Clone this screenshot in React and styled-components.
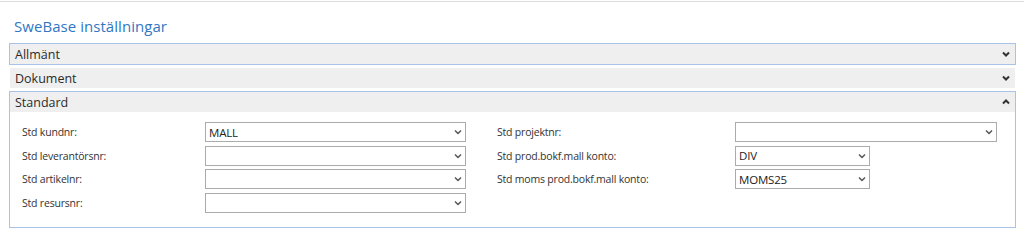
import React from "react";
import styled, { createGlobalStyle } from "styled-components";

const Global = createGlobalStyle`
  html, body { margin: 0; padding: 0; background: #ffffff; }
  body { font-family: "Open Sans", "Noto Sans", "Liberation Sans", sans-serif; color: #333; }
`;

const Page = styled.div`
  width: 1024px;
  height: 244px;
  box-sizing: border-box;
  border-top: 1px solid #dcdcdc;
  margin-top: 1px;
  padding: 0 8px 0 9px;
`;

const Title = styled.h1`
  margin: 0;
  padding: 14px 0 0 5px;
  height: 41px;
  box-sizing: border-box;
  font-weight: 400;
  font-size: 15px;
  letter-spacing: 0.05px;
  line-height: 20px;
  color: #2f77c4;
`;

const Sections = styled.div`
  display: flex;
  flex-direction: column;
  gap: 2px;
`;

const Section = styled.section`
  border: 1px solid ${(p) => (p.$active ? "#a9c3e8" : "transparent")};
`;

const Header = styled.div`
  height: 20px;
  background: #efefef;
  display: flex;
  align-items: center;
  justify-content: space-between;
  padding: 0 5px 0 5px;
  font-size: 12.5px;
  color: #2b2b2b;
`;

const Body = styled.div`
  display: grid;
  grid-template-columns: 475px 1fr;
  padding: 10px 0 14px 12px;
`;

const Column = styled.div`
  display: flex;
  flex-direction: column;
  gap: 3.5px;
`;

const Row = styled.div`
  display: grid;
  grid-template-columns: ${(p) => p.$labelWidth}px auto;
  align-items: center;
  height: 20px;
`;

const Label = styled.span`
  font-size: 10.5px;
  letter-spacing: -0.2px;
  color: #333;
`;

const Select = styled.div`
  box-sizing: border-box;
  width: ${(p) => p.$width}px;
  height: 20px;
  border: 1px solid #ababab;
  background: #fff;
  display: flex;
  align-items: center;
  justify-content: space-between;
  padding: 0 3px 0 3px;
  font-size: 11.5px;
  letter-spacing: -0.2px;
  color: #222;
`;

const Chevron = ({ up, bold }) => (
  <svg width="8" height="6" viewBox="0 0 8 6" style={{ display: "block" }}>
    <path
      d={up ? "M1 4.5 L4 1.5 L7 4.5" : "M1 1.5 L4 4.5 L7 1.5"}
      fill="none"
      stroke={bold ? "#333" : "#555"}
      strokeWidth={bold ? 2 : 1.5}
    />
  </svg>
);

const Field = ({ label, value, labelWidth, width }) => (
  <Row $labelWidth={labelWidth}>
    <Label>{label}</Label>
    <Select $width={width}>
      <span>{value}</span>
      <Chevron />
    </Select>
  </Row>
);

export default function App() {
  return (
    <>
      <Global />
      <Page>
        <Title>SweBase inställningar</Title>
        <Sections>
          <Section $active>
            <Header>
              <span>Allmänt</span>
              <Chevron bold />
            </Header>
          </Section>
          <Section>
            <Header>
              <span>Dokument</span>
              <Chevron bold />
            </Header>
          </Section>
          <Section $active>
            <Header>
              <span>Standard</span>
              <Chevron bold up />
            </Header>
            <Body>
              <Column>
                <Field label="Std kundnr:" value="MALL" labelWidth={183} width={261} />
                <Field label="Std leverantörsnr:" value="" labelWidth={183} width={261} />
                <Field label="Std artikelnr:" value="" labelWidth={183} width={261} />
                <Field label="Std resursnr:" value="" labelWidth={183} width={261} />
              </Column>
              <Column>
                <Field label="Std projektnr:" value="" labelWidth={238} width={262} />
                <Field label="Std prod.bokf.mall konto:" value="DIV" labelWidth={238} width={135} />
                <Field label="Std moms prod.bokf.mall konto:" value="MOMS25" labelWidth={238} width={135} />
              </Column>
            </Body>
          </Section>
        </Sections>
      </Page>
    </>
  );
}
